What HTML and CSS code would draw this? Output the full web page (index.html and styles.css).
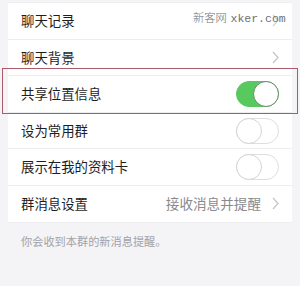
FILE: index.html
```html
<!DOCTYPE html>
<html lang="zh-CN">
<head>
<meta charset="utf-8">
<link rel="stylesheet" href="styles.css">
</head>
<body>
<div class="page">
  <div class="list">
    <div class="row">
      <span class="label">聊天记录</span>
      <svg class="chev" width="7" height="13" viewBox="0 0 7 13"><polyline points="1,1 6,6.5 1,12" fill="none" stroke="#d2d2d6" stroke-width="1.2"/></svg>
    </div>
    <div class="row">
      <span class="label">聊天背景</span>
      <svg class="chev" width="7" height="13" viewBox="0 0 7 13"><polyline points="1,1 6,6.5 1,12" fill="none" stroke="#c4c4c8" stroke-width="1.2"/></svg>
    </div>
    <div class="row">
      <span class="label">共享位置信息</span>
      <span class="toggle on"><span class="knob"></span></span>
    </div>
    <div class="row">
      <span class="label">设为常用群</span>
      <span class="toggle"><span class="knob"></span></span>
    </div>
    <div class="row">
      <span class="label">展示在我的资料卡</span>
      <span class="toggle"><span class="knob"></span></span>
    </div>
    <div class="row">
      <span class="label">群消息设置</span>
      <span class="value">接收消息并提醒</span>
      <svg class="chev" width="7" height="13" viewBox="0 0 7 13"><polyline points="1,1 6,6.5 1,12" fill="none" stroke="#c4c4c8" stroke-width="1.2"/></svg>
    </div>
  </div>
  <p class="note">你会收到本群的新消息提醒。</p>
  <div class="highlight"></div>
  <div class="watermark"><span class="wm-cn">新客网</span> <span class="wm-en">xker.com</span></div>
</div>
</body>
</html>
```
FILE: styles.css
```css
body {
  margin: 0;
  background: #f4f4f6;
  font-family: "Noto Sans CJK SC", "Noto Sans", sans-serif;
}
.page {
  position: relative;
  width: 300px;
  height: 286px;
  padding-top: 2px;
  box-sizing: border-box;
  overflow: hidden;
}
.list {
  margin: 0 8px;
  background: #fff;
  border-top: 1px solid #efeff1;
}
.row {
  height: 35.6px;
  display: flex;
  align-items: center;
  padding: 0 13px;
  border-bottom: 1px solid #ededef;
}
.label {
  flex: 1;
  font-size: 13.4px;
  color: #1e1e1e;
  line-height: 1;
}
.value {
  font-size: 13.6px;
  color: #8a8a8c;
  margin-right: 11px;
  line-height: 1;
}
.chev {
  display: block;
}
.toggle {
  position: relative;
  width: 43px;
  height: 26px;
  border-radius: 13px;
  background: #fff;
  border: 1px solid #dedee0;
  box-sizing: border-box;
}
.toggle .knob {
  position: absolute;
  top: -1px;
  left: -1px;
  width: 26px;
  height: 26px;
  border-radius: 50%;
  background: #fff;
  border: 1px solid #d4d4d6;
  box-sizing: border-box;
}
.toggle.on {
  background: #58c95f;
  border-color: #58c95f;
}
.toggle.on .knob {
  left: auto;
  right: -1px;
  border-color: #6e8a6e;
}
.note {
  margin: 0;
  padding: 11px 21px;
  font-size: 11.2px;
  line-height: 15px;
  color: #a2a2a6;
}
.highlight {
  position: absolute;
  left: 2px;
  top: 68px;
  width: 296px;
  height: 46px;
  border: 1.5px solid #a95a6b;
  box-sizing: border-box;
}
.watermark {
  position: absolute;
  left: 193px;
  top: 7px;
  color: #707070;
  line-height: 16px;
  white-space: nowrap;
}
.wm-cn {
  font-size: 11.3px;
  font-weight: 300;
}
.wm-en {
  font-family: "Liberation Mono", monospace;
  font-size: 11.5px;
}
```
